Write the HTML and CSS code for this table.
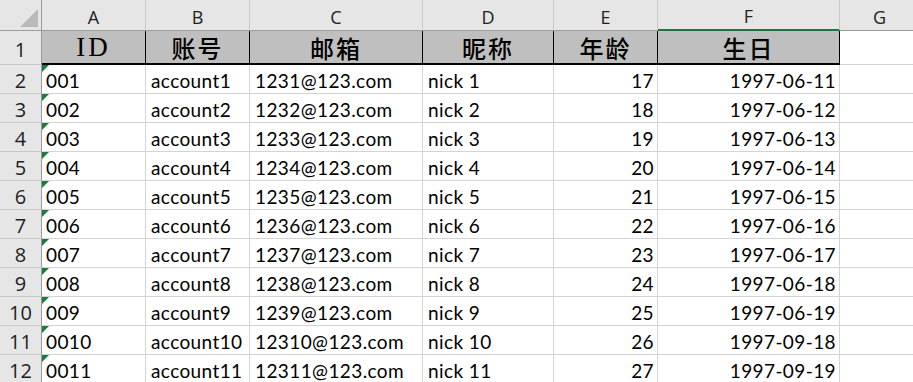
FILE: index.html
```html
<!DOCTYPE html>
<html lang="zh">
<head>
<meta charset="utf-8">
<link rel="stylesheet" href="styles.css">
</head>
<body>
<div class="sheet">
  <div class="corner"><span class="corner-tri"></span></div>
  <div class="colhead">A</div>
  <div class="colhead">B</div>
  <div class="colhead">C</div>
  <div class="colhead">D</div>
  <div class="colhead">E</div>
  <div class="colhead active">F</div>
  <div class="colhead">G</div>

  <div class="rowhead r1">1</div>
  <div class="hcell latin">ID</div>
  <div class="hcell">账号</div>
  <div class="hcell">邮箱</div>
  <div class="hcell">昵称</div>
  <div class="hcell">年龄</div>
  <div class="hcell">生日</div>
  <div class="cell r1g"></div>

  <div class="rowhead">2</div><div class="cell txt">001</div><div class="cell">account1</div><div class="cell">1231@123.com</div><div class="cell">nick 1</div><div class="cell num">17</div><div class="cell num">1997-06-11</div><div class="cell"></div>
  <div class="rowhead">3</div><div class="cell txt">002</div><div class="cell">account2</div><div class="cell">1232@123.com</div><div class="cell">nick 2</div><div class="cell num">18</div><div class="cell num">1997-06-12</div><div class="cell"></div>
  <div class="rowhead">4</div><div class="cell txt">003</div><div class="cell">account3</div><div class="cell">1233@123.com</div><div class="cell">nick 3</div><div class="cell num">19</div><div class="cell num">1997-06-13</div><div class="cell"></div>
  <div class="rowhead">5</div><div class="cell txt">004</div><div class="cell">account4</div><div class="cell">1234@123.com</div><div class="cell">nick 4</div><div class="cell num">20</div><div class="cell num">1997-06-14</div><div class="cell"></div>
  <div class="rowhead">6</div><div class="cell txt">005</div><div class="cell">account5</div><div class="cell">1235@123.com</div><div class="cell">nick 5</div><div class="cell num">21</div><div class="cell num">1997-06-15</div><div class="cell"></div>
  <div class="rowhead">7</div><div class="cell txt">006</div><div class="cell">account6</div><div class="cell">1236@123.com</div><div class="cell">nick 6</div><div class="cell num">22</div><div class="cell num">1997-06-16</div><div class="cell"></div>
  <div class="rowhead">8</div><div class="cell txt">007</div><div class="cell">account7</div><div class="cell">1237@123.com</div><div class="cell">nick 7</div><div class="cell num">23</div><div class="cell num">1997-06-17</div><div class="cell"></div>
  <div class="rowhead">9</div><div class="cell txt">008</div><div class="cell">account8</div><div class="cell">1238@123.com</div><div class="cell">nick 8</div><div class="cell num">24</div><div class="cell num">1997-06-18</div><div class="cell"></div>
  <div class="rowhead">10</div><div class="cell txt">009</div><div class="cell">account9</div><div class="cell">1239@123.com</div><div class="cell">nick 9</div><div class="cell num">25</div><div class="cell num">1997-06-19</div><div class="cell"></div>
  <div class="rowhead">11</div><div class="cell txt">0010</div><div class="cell">account10</div><div class="cell">12310@123.com</div><div class="cell">nick 10</div><div class="cell num">26</div><div class="cell num">1997-09-18</div><div class="cell"></div>
  <div class="rowhead">12</div><div class="cell txt">0011</div><div class="cell">account11</div><div class="cell">12311@123.com</div><div class="cell">nick 11</div><div class="cell num">27</div><div class="cell num">1997-09-19</div><div class="cell"></div>
</div>
</body>
</html>
```
FILE: styles.css
```css
* { box-sizing: border-box; }
html, body { margin: 0; padding: 0; background: #fff; overflow: hidden; }
.sheet {
  display: grid;
  grid-template-columns: 42px 104px 104px 173px 131px 104px 182px 80px;
  grid-template-rows: 31px 34px repeat(11, 29px);
  font-family: Lato, "Open Sans", sans-serif;
  color: #000;
  width: 920px;
}
.corner {
  background: #e6e6e6;
  border-right: 1px solid #9b9b9b;
  border-bottom: 1px solid #9b9b9b;
  position: relative;
}
.corner-tri {
  position: absolute;
  right: 3px;
  bottom: 3px;
  width: 0; height: 0;
  border-left: 18px solid transparent;
  border-bottom: 18px solid #b9b9b9;
}
.colhead {
  background: #e6e6e6;
  border-right: 1px solid #c8c8c8;
  border-bottom: 1px solid #9b9b9b;
  display: flex;
  align-items: center;
  justify-content: center;
  font-family: "Open Sans", sans-serif;
  font-size: 18px;
  color: #222;
  padding-top: 3px;
}
.colhead.active { border-bottom: 2px solid #217346; }
.rowhead {
  background: #e6e6e6;
  border-right: 1px solid #9b9b9b;
  border-bottom: 1px solid #c8c8c8;
  display: flex;
  align-items: center;
  justify-content: center;
  font-family: "Open Sans", sans-serif;
  font-size: 20px;
  color: #222;
  padding-top: 3px;
}
.hcell {
  background: #bfbfbf;
  border-right: 1px solid #000;
  border-bottom: 2px solid #000;
  display: flex;
  align-items: center;
  justify-content: center;
  font-family: "Liberation Serif", "Noto Sans CJK SC", serif;
  font-size: 24px;
  font-weight: 500;
  letter-spacing: 2px;
  padding-top: 1px;
}
.hcell.latin { font-family: "Liberation Serif", serif; font-weight: normal; font-size: 27px; letter-spacing: 3px; }
.cell {
  border-right: 1px solid #d4d4d4;
  border-bottom: 1px solid #d4d4d4;
  display: flex;
  align-items: center;
  padding: 3px 4px 0 5px;
  font-size: 19px;
  letter-spacing: 0.4px;
  white-space: nowrap;
  overflow: hidden;
  position: relative;
}
.cell.num { justify-content: flex-end; padding-right: 3px; }
.cell.txt { padding-left: 4px; }
.cell.txt::before {
  content: "";
  position: absolute;
  left: 0; top: 0;
  width: 0; height: 0;
  border-top: 7px solid #1b7a3c;
  border-right: 7px solid transparent;
}
```
